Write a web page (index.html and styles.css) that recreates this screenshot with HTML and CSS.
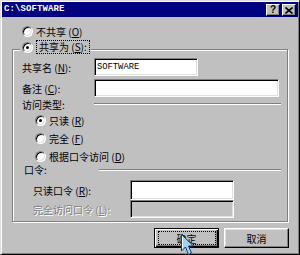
FILE: index.html
```html
<!DOCTYPE html>
<html>
<head>
<meta charset="utf-8">
<link rel="stylesheet" href="styles.css">
</head>
<body>
<div class="window">
  <div class="titlebar">
    <span class="title">C:\SOFTWARE</span>
    <div class="tb-btns">
      <span class="tbtn help">?</span>
      <span class="tbtn"><svg width="8" height="7" viewBox="0 0 8 7"><path d="M0.5 0.5 L7.5 6.5 M7.5 0.5 L0.5 6.5" stroke="#000" stroke-width="1.6"/></svg></span>
    </div>
  </div>
  <div class="content">
    <div class="row r1"><span class="radio"></span><span>不共享 (<u>O</u>)</span></div>
    <div class="group">
      <div class="row legend"><span class="radio on"></span><span class="focus">共享为 (<u>S</u>):</span></div>
      <div class="field f1"><span class="lbl">共享名 (<u>N</u>):</span><div class="input w-short">SOFTWARE</div></div>
      <div class="field f2"><span class="lbl">备注 (<u>C</u>):</span><div class="input w-long"></div></div>
      <div class="row sect s1"><span class="lbl">访问类型:</span><span class="sep"></span></div>
      <div class="row rad rad1"><span class="radio on"></span><span>只读 (<u>R</u>)</span></div>
      <div class="row rad rad2"><span class="radio"></span><span>完全 (<u>F</u>)</span></div>
      <div class="row rad rad3"><span class="radio"></span><span>根据口令访问 (<u>D</u>)</span></div>
      <div class="row sect s2"><span class="lbl lbl2">口令:</span><span class="sep sep2"></span></div>
      <div class="field f3"><span class="lbl lbl3">只读口令 (<u>R</u>):</span><div class="input w-pw tall"></div></div>
      <div class="field f4"><span class="lbl lbl3 disabled">完全访问口令 (<u>L</u>):</span><div class="input w-pw off"></div></div>
    </div>
    <div class="buttons">
      <div class="btn default"><span class="focus-rect">确定</span></div>
      <div class="btn">取消</div>
    </div>
  </div>
  <svg class="cursor" width="14" height="22" viewBox="0 0 14 22"><polygon points="0.5,0.5 0.5,17 4.5,13 7.5,20.5 10.5,19 7.5,12 12.5,12" fill="#9fd3ee" stroke="#123c7a" stroke-width="1"/><polyline points="1.5,2.5 1.5,14.5" stroke="#fff" stroke-width="1"/></svg>
</div>
</body>
</html>
```
FILE: styles.css
```css
* { box-sizing: border-box; }
body {
  margin: 0;
  background: #c0c0c0;
  font-family: "Noto Sans CJK SC", "Liberation Sans", sans-serif;
  font-size: 10px;
  color: #000;
}
u { text-decoration: underline; }
.window {
  position: relative;
  width: 300px;
  height: 255px;
  background: #c0c0c0;
  border: 1px solid;
  border-color: #dfdfdf #000 #000 #dfdfdf;
  box-shadow: inset 1px 1px #fff, inset -1px -1px #808080;
  padding: 1px;
}
.titlebar {
  height: 15px;
  background: #000080;
  color: #fff;
  display: flex;
  align-items: flex-start;
}
.title {
  font-family: "Liberation Mono", monospace;
  font-size: 9px;
  letter-spacing: 0.1px;
  font-weight: bold;
  line-height: 15px;
  margin-left: 2px;
}
.tb-btns {
  margin-left: auto;
  margin-top: 2px;
  margin-right: 2px;
  display: flex;
  gap: 2px;
}
.tbtn {
  width: 14px;
  height: 12px;
  background: #c0c0c0;
  border: 1px solid;
  border-color: #fff #000 #000 #fff;
  box-shadow: inset -1px -1px #808080;
  display: flex;
  align-items: center;
  justify-content: center;
  color: #000;
}
.help {
  font-family: "Liberation Sans", sans-serif;
  font-weight: bold;
  font-size: 10px;
  line-height: 10px;
}
.content {
  padding: 7px 10px 0 10px;
}
.row {
  display: flex;
  align-items: center;
  height: 14px;
  white-space: nowrap;
}
.r1 { margin-left: 10px; }
.radio {
  position: relative;
  flex: none;
  width: 11px;
  height: 11px;
  border-radius: 50%;
  background: #fff;
  border: 1px solid;
  border-color: #808080 #fff #fff #808080;
  box-shadow: inset 1px 1px #000, inset -1px -1px #dfdfdf;
  margin-right: 3px;
}
.radio.on::after {
  content: "";
  position: absolute;
  left: 3px;
  top: 3px;
  width: 3px;
  height: 3px;
  border-radius: 50%;
  background: #000;
}
.group {
  margin-top: 11px;
  border: 1px solid #808080;
  box-shadow: 1px 1px #fff, inset 1px 1px #fff;
  padding: 0 6px 3px 9px;
}
.legend {
  margin-top: -10px;
  margin-left: -2px;
  padding-left: 2px;
  padding-right: 1px;
  width: fit-content;
  background: #c0c0c0;
}
.focus {
  border: 1px dotted #000;
  padding: 0 2px 0 2px;
  line-height: 12px;
}
.field {
  display: flex;
  align-items: center;
  white-space: nowrap;
}
.f1 { margin-top: 4px; }
.f2 { margin-top: 3px; }
.f3 { margin-top: 3px; }
.f4 { margin-top: 0; }
.lbl { width: 72px; flex: none; }
.lbl2 { width: 75px; margin-left: 2px; }
.lbl3 { width: 97px; margin-left: 11px; }
.disabled {
  color: #808080;
  text-shadow: 1px 1px #fff;
}
.input {
  height: 18px;
  background: #fff;
  border: 1px solid;
  border-color: #808080 #fff #fff #808080;
  box-shadow: inset 1px 1px #000, inset -1px -1px #dfdfdf;
  font-family: "Liberation Mono", monospace;
  font-size: 8.8px;
  padding-left: 2px;
  display: flex;
  align-items: center;
}
.input.tall { height: 20px; }
.input.off { background: #c0c0c0; }
.w-short { width: 104px; }
.w-long { width: 185px; }
.w-pw { width: 104px; }
.sect { align-items: flex-start; line-height: 14px; }
.s1 { margin-top: 1px; }
.s2 { margin-top: 0; }
.sep {
  flex: 1;
  height: 2px;
  margin-top: 5px;
  border-top: 1px solid #808080;
  border-bottom: 1px solid #fff;
}
.sep2 { margin-top: 6px; }
.rad { margin-left: 13px; }
.rad1 { margin-top: 1px; }
.rad2 { margin-top: 4px; }
.rad3 { margin-top: 4px; }
.buttons {
  display: flex;
  justify-content: flex-end;
  gap: 5px;
  margin-top: 6px;
  margin-right: -1px;
}
.btn {
  width: 65px;
  height: 20px;
  border: 1px solid;
  border-color: #fff #000 #000 #fff;
  box-shadow: inset -1px -1px #808080, inset 1px 1px #dfdfdf;
  display: flex;
  align-items: center;
  justify-content: center;
}
.btn.default {
  border: 1px solid #000;
  box-shadow: inset 1px 1px #fff, inset -1px -1px #000, inset -2px -2px #808080;
}
.focus-rect {
  width: 58px;
  height: 14px;
  border: 1px dotted #000;
  display: flex;
  align-items: center;
  justify-content: center;
}
.cursor {
  position: absolute;
  left: 180px;
  top: 233px;
}
```
